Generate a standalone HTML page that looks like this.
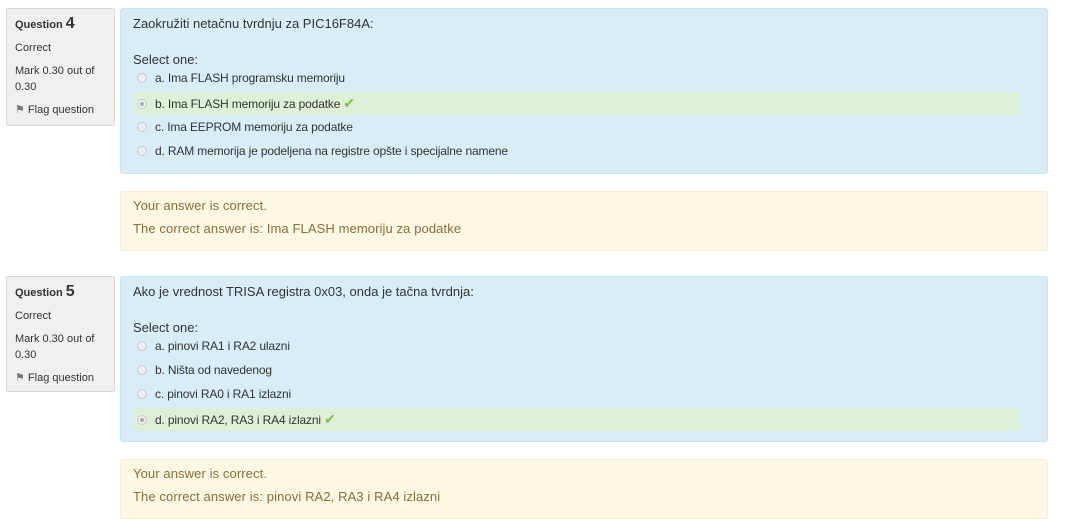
<!DOCTYPE html>
<html><head><meta charset="utf-8"><style>
body{margin:0;width:1080px;height:532px;background:#fff;font-family:"Liberation Sans",sans-serif;color:#333;position:relative;overflow:hidden}
.info{position:absolute;left:6px;width:109px;background:#f0f0f0;border:1px solid #d8d8d8;border-radius:2px;font-size:11px;box-sizing:border-box;padding:6px 8px}
.info .q{font-weight:bold;font-size:11px;margin-top:1px}
.info .q b{font-size:16px}
.info div{margin-bottom:7px;line-height:16px}
.content{position:absolute;left:120px;width:928px;background:#d9edf7;border:1px solid #bce8f1;border-radius:3px;box-sizing:border-box}
.qt{position:absolute;left:12px;top:7px;font-size:13px;color:#333}
.sel{position:absolute;left:12px;top:43px;font-size:13px}
.opt{position:absolute;left:12px;width:886px;height:23px;font-size:12px;line-height:23px;letter-spacing:-0.15px}
.opt.ok{background:#dff0d8}
.rad{display:inline-block;width:8px;height:8px;border-radius:50%;border:1px solid #c8c8c8;background:#eee;margin:0 8px 0 4px;vertical-align:-1px;position:relative}
.ok .rad::after{content:"";position:absolute;left:2px;top:2px;width:4px;height:4px;border-radius:50%;background:#aaa}
.chk{color:#7cc142;font-size:14px;margin-left:3px}
.fb{position:absolute;left:120px;width:928px;height:60px;background:#fcf8e3;border:1px solid #faebcc;border-radius:3px;box-sizing:border-box;color:#8a6d3b;font-size:13px;letter-spacing:0.1px}
.fb div{position:absolute;left:12px}
</style></head><body>

<div class="info" style="top:8px;height:118px">
<div class="q">Question <b>4</b></div>
<div>Correct</div>
<div>Mark 0.30 out of 0.30</div>
<div><span style="color:#777">&#9873;</span> Flag question</div>
</div>
<div class="content" style="top:8px;height:166px">
<div class="qt">Zaokružiti netačnu tvrdnju za PIC16F84A:</div>
<div class="sel">Select one:</div>
<div class="opt" style="top:58px"><span class="rad"></span>a. Ima FLASH programsku memoriju</div>
<div class="opt ok" style="top:83px"><span class="rad"></span>b. Ima FLASH memoriju za podatke<span class="chk">✔</span></div>
<div class="opt" style="top:107px"><span class="rad"></span>c. Ima EEPROM memoriju za podatke</div>
<div class="opt" style="top:131px"><span class="rad"></span>d. RAM memorija je podeljena na registre opšte i specijalne namene</div>
</div>
<div class="fb" style="top:191px">
<div style="top:6px">Your answer is correct.</div>
<div style="top:29px">The correct answer is: Ima FLASH memoriju za podatke</div>
</div>

<div class="info" style="top:276px;height:116px">
<div class="q">Question <b>5</b></div>
<div>Correct</div>
<div>Mark 0.30 out of 0.30</div>
<div><span style="color:#777">&#9873;</span> Flag question</div>
</div>
<div class="content" style="top:276px;height:166px">
<div class="qt">Ako je vrednost TRISA registra 0x03, onda je tačna tvrdnja:</div>
<div class="sel">Select one:</div>
<div class="opt" style="top:58px"><span class="rad"></span>a. pinovi RA1 i RA2 ulazni</div>
<div class="opt" style="top:82px"><span class="rad"></span>b. Ništa od navedenog</div>
<div class="opt" style="top:106px"><span class="rad"></span>c. pinovi RA0 i RA1 izlazni</div>
<div class="opt ok" style="top:131px"><span class="rad"></span>d. pinovi RA2, RA3 i RA4 izlazni<span class="chk">✔</span></div>
</div>
<div class="fb" style="top:459px">
<div style="top:6px">Your answer is correct.</div>
<div style="top:29px">The correct answer is: pinovi RA2, RA3 i RA4 izlazni</div>
</div>
</body></html>
